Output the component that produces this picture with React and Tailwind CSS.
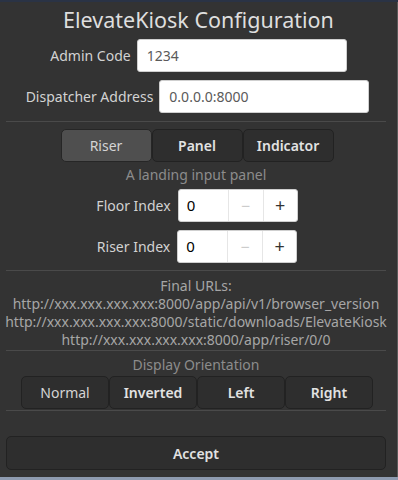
import React from "react"

const font = { fontFamily: '"Noto Sans", "DejaVu Sans", sans-serif' }

function Separator() {
  return <div className="h-px bg-[#4a4a4a] mx-[6px]" />
}

function Field({ label, value, width }) {
  return (
    <div className="flex items-center justify-center gap-[6px]">
      <span className="text-[14px] text-[#d2d2d2]">{label}</span>
      <div className={`${width} h-[33px] bg-white rounded-[3px] border border-[#cfcfcf] flex items-center px-[9px] text-[14px] text-[#5a5a5a]`}>
        {value}
      </div>
    </div>
  )
}

function SpinRow({ label }) {
  return (
    <div className="flex items-center justify-center gap-[7px] pl-[2px]">
      <span className="text-[14px] text-[#d2d2d2]">{label}</span>
      <div className="w-[120px] h-[33px] bg-white rounded-[3px] border border-[#cfcfcf] flex text-[15px]">
        <div className="w-[49px] flex items-center pl-[8px] text-black">0</div>
        <div className="w-[35px] border-l border-[#e6e6e6] flex items-center justify-center text-[#cccccc] text-[16px]">−</div>
        <div className="flex-1 border-l border-[#e6e6e6] flex items-center justify-center text-[#333] text-[18px]">+</div>
      </div>
    </div>
  )
}

export default function App() {
  const tabs = ["Riser", "Panel", "Indicator"]
  const orientations = ["Normal", "Inverted", "Left", "Right"]
  const urls = [
    "http://xxx.xxx.xxx.xxx:8000/app/api/v1/browser_version",
    "http://xxx.xxx.xxx.xxx:8000/static/downloads/ElevateKiosk",
    "http://xxx.xxx.xxx.xxx:8000/app/riser/0/0",
  ]

  return (
    <div className="w-[398px] h-[480px] bg-[#333333] flex flex-col overflow-hidden" style={font}>
      <div className="h-[2px] bg-[#2a3345]" />
      <div className="flex-1 flex">
        <div className="w-[392px] flex flex-col">
          <div className="h-[35px] flex items-center justify-center text-[21.5px] text-[#dedede] pt-[1px] pl-[5px]">
            ElevateKiosk Configuration
          </div>
          <div className="mt-[2px] pl-[5px]">
            <Field label="Admin Code" value="1234" width="w-[210px]" />
          </div>
          <div className="mt-[8px] pl-[3px]">
            <Field label="Dispatcher Address" value="0.0.0.0:8000" width="w-[210px]" />
          </div>
          <div className="mt-[8px]">
            <Separator />
          </div>

          <div className="mt-[7px] flex justify-center pl-[2px]">
            {tabs.map((t, i) => (
              <div
                key={t}
                className={
                  i === 0
                    ? "w-[91px] h-[33px] rounded-[5px] border border-[#262626] bg-[#4f4f4f] flex items-center justify-center text-[14px] text-[#d4d4d4]"
                    : "w-[91px] h-[33px] rounded-[5px] border border-[#222222] bg-[#2e2e2e] flex items-center justify-center text-[14px] font-semibold text-[#e2e2e2]"
                }
              >
                {t}
              </div>
            ))}
          </div>
          <div className="h-[23px] flex items-center justify-center text-[14px] text-[#8c8c8c] mt-[1px]">
            A landing input panel
          </div>
          <div className="mt-[3px]">
            <SpinRow label="Floor Index" />
          </div>
          <div className="mt-[8px]">
            <SpinRow label="Riser Index" />
          </div>
          <div className="mt-[7px]">
            <Separator />
          </div>

          <div className="mt-[6px] flex flex-col items-center text-[14px] text-[#a6a6a6] leading-[18px]">
            <div>Final URLs:</div>
            {urls.map((u) => (
              <div key={u} className="whitespace-nowrap">{u}</div>
            ))}
          </div>
          <div className="mt-[1px]">
            <Separator />
          </div>
          <div className="h-[24px] mt-[1px] flex items-center justify-center text-[14px] text-[#8c8c8c]">
            Display Orientation
          </div>
          <div className="flex justify-center pl-[2px]">
            {orientations.map((o, i) => (
              <div
                key={o}
                className={
                  "w-[88px] h-[33px] rounded-[5px] border border-[#222222] bg-[#2e2e2e] flex items-center justify-center text-[14px] " +
                  (i === 0 ? "font-normal text-[#d4d4d4]" : "font-semibold text-[#e2e2e2]")
                }
              >
                {o}
              </div>
            ))}
          </div>
          <div className="mt-[1px]">
            <Separator />
          </div>
          <div className="mt-[25px] mx-[6px] h-[34px] rounded-[5px] border border-[#222222] bg-[#2e2e2e] flex items-center justify-center text-[14px] font-semibold text-[#e2e2e2]">
            Accept
          </div>
        </div>
        <div className="flex-1 bg-[#333333] border-r border-[#5a5a5a]" />
      </div>
      <div className="h-[3px] bg-[#8e9bb0]" />
    </div>
  )
}
